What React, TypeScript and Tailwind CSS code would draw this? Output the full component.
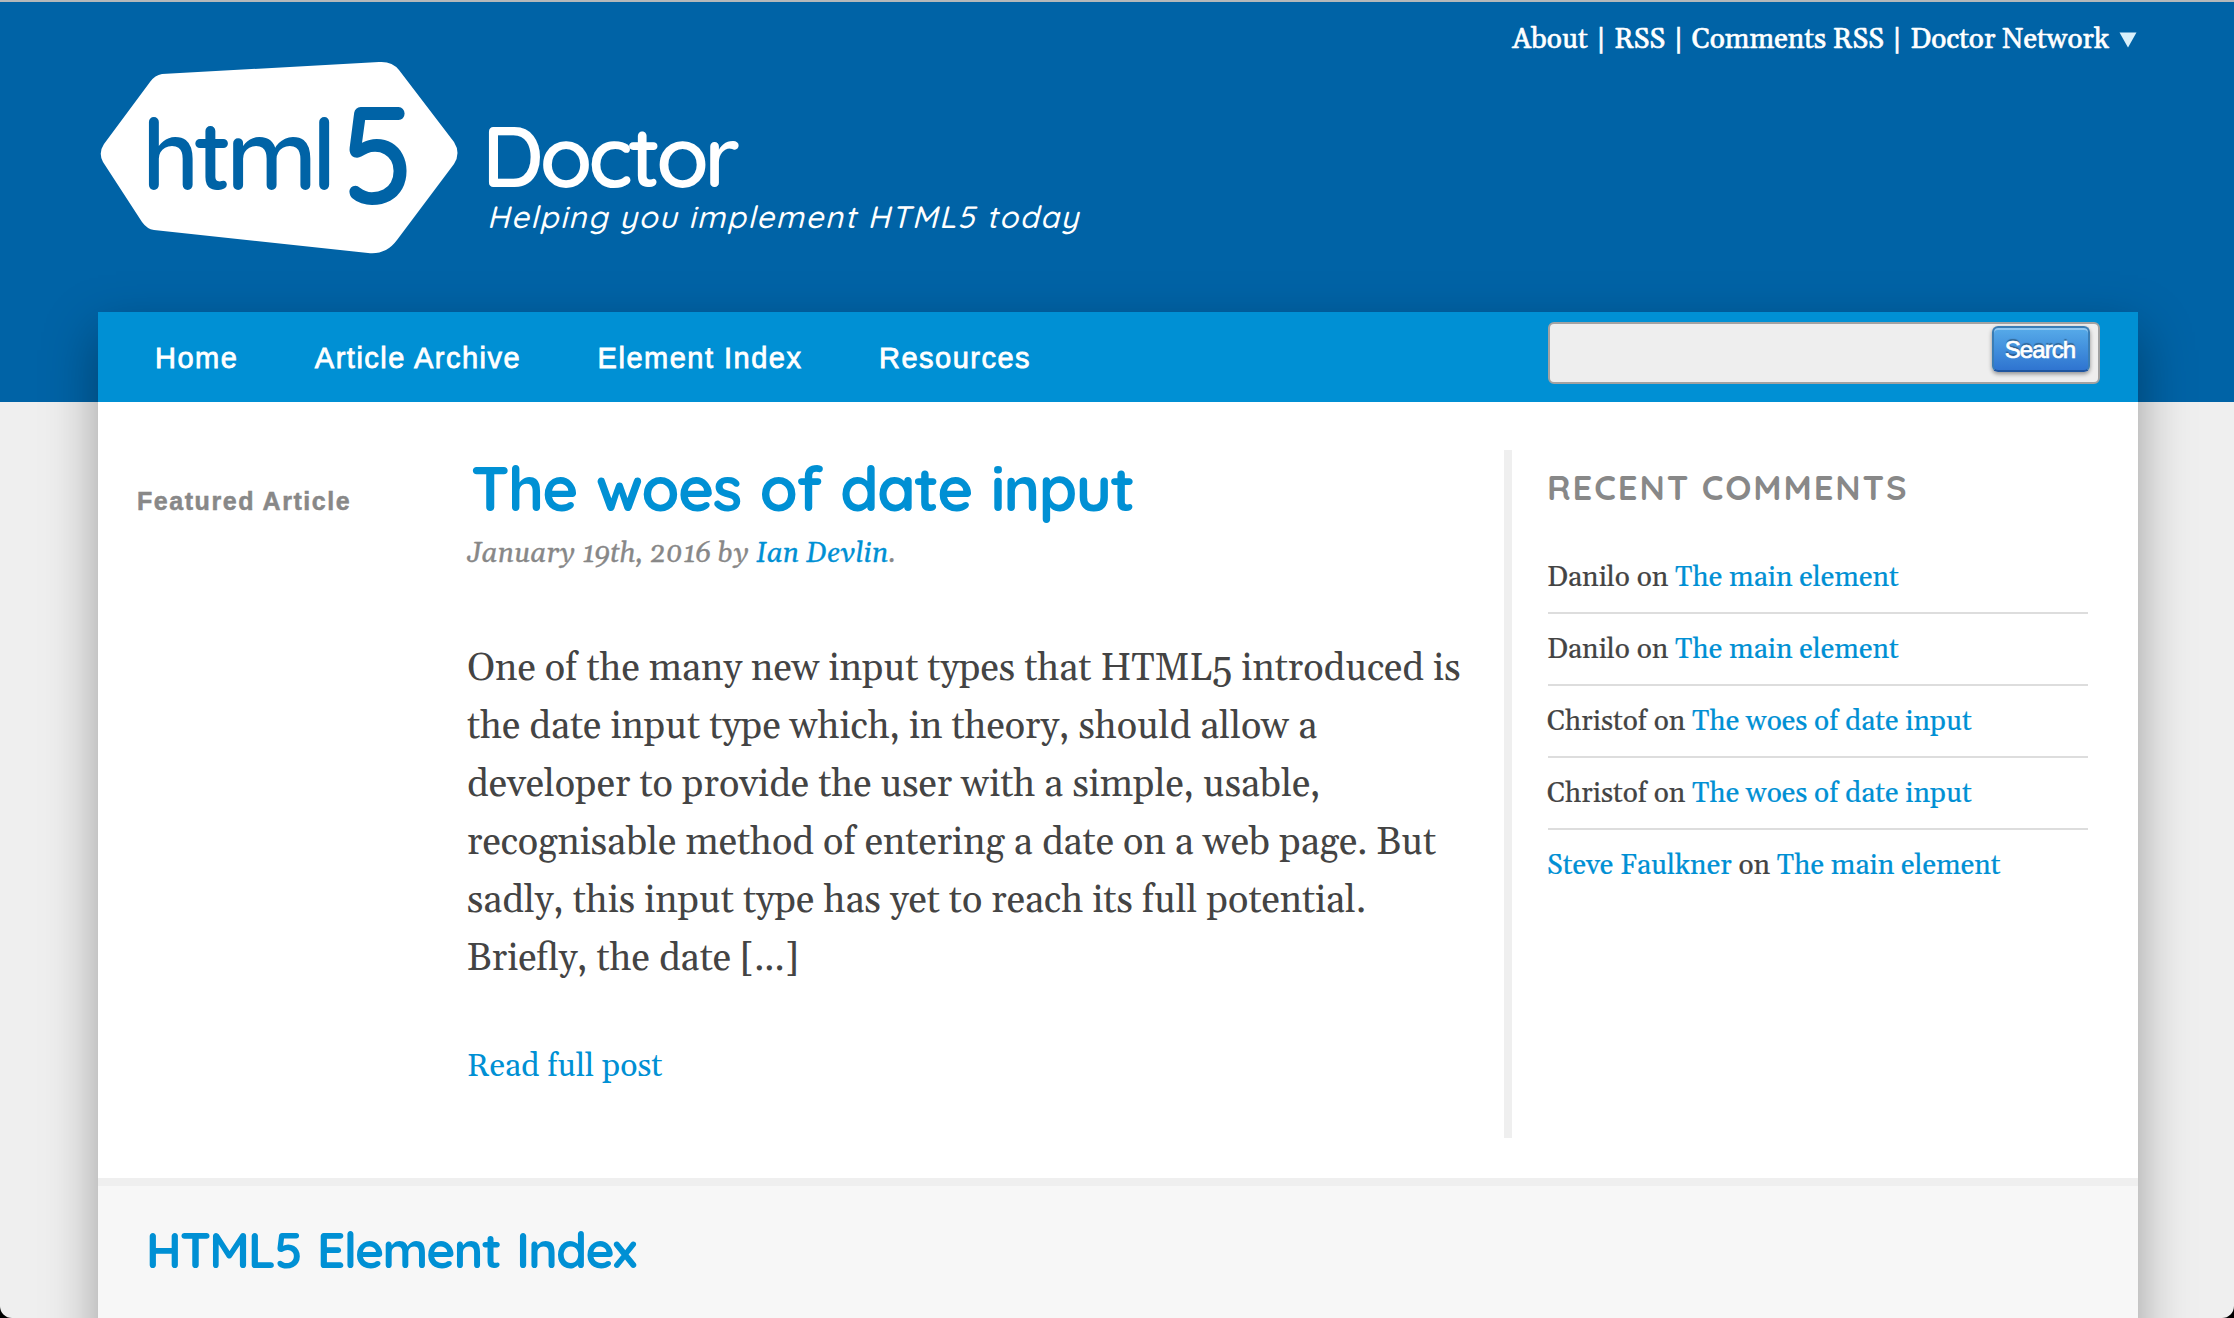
import React from "react";

const serif = "font-['Gelasio','Georgia','Liberation_Serif',serif]";
const sans = "font-['Liberation_Sans',Arial,sans-serif]";
const rounded = "font-['Quicksand','Lato',sans-serif]";

const navItems = ["Home", "Article Archive", "Element Index", "Resources"];

const comments = [
  { author: "Danilo", link: false, post: "The main element" },
  { author: "Danilo", link: false, post: "The main element" },
  { author: "Christof", link: false, post: "The woes of date input" },
  { author: "Christof", link: false, post: "The woes of date input" },
  { author: "Steve Faulkner", link: true, post: "The main element" },
];

const excerpt = [
  "One of the many new input types that HTML5 introduced is",
  "the date input type which, in theory, should allow a",
  "developer to provide the user with a simple, usable,",
  "recognisable method of entering a date on a web page. But",
  "sadly, this input type has yet to reach its full potential.",
  "Briefly, the date [...]",
];

function Logo() {
  return (
    <svg width="360" height="196" viewBox="0 0 360 196" className="block shrink-0" aria-label="html5">
      <path
        d="M62 14 L279 2 Q292 1 299 10 L354 82 Q361 93 354 104 L297 180 Q286 195 268 193 L54 170 Q47 169 42 162 L3 102 Q-2 93 4 84 L50 22 Q55 15 62 14 Z"
        fill="#fff"
      />
      <g fill="#0063a6" fontWeight="600" className={rounded}>
        <text x="42" y="130" fontSize="99" textLength="195">
          html
        </text>
        <text x="0" y="0" fontSize="139" transform="translate(241 143.5) scale(0.93 1)">
          5
        </text>
      </g>
    </svg>
  );
}

function Pipe() {
  return <span className="mx-[8px]">|</span>;
}

export default function App() {
  return (
    <div className="h-[1318px] w-[2234px] bg-black">
      <div className="h-full overflow-hidden rounded-b-[12px] bg-[#efefef]">
        <header className="h-[402px] border-t-2 border-[#b4b8ba] bg-[#0063a6] text-white">
          <div className={`mr-[97px] flex h-[58px] items-start justify-end pt-[18px] text-[28px] leading-[40px] [-webkit-text-stroke:0.6px_white] ${serif}`}>
            <a>About</a>
            <Pipe />
            <a>RSS</a>
            <Pipe />
            <a>Comments RSS</a>
            <Pipe />
            <a>Doctor Network</a>
            <svg width="18" height="16" viewBox="0 0 18 16" className="mt-[12px] ml-[10px]">
              <path d="M0.5 0.5 H17.5 L9 15.5 Z" fill="#d9f0fb" />
            </svg>
          </div>
          <div className="flex pl-[100px]">
            <Logo />
            <div className={`ml-[22px] pt-[53px] ${rounded}`}>
              <h1 className="text-[86px] leading-[84px] font-semibold tracking-[-4.7px]">Doctor</h1>
              <p className="ml-[5px] text-[31px] leading-[40px] font-medium whitespace-nowrap italic tracking-[1.57px]">
                Helping you implement HTML5 today
              </p>
            </div>
          </div>
        </header>

        <div className="relative mx-[98px] -mt-[90px] mr-[96px] h-[1060px] bg-white shadow-[0_20px_50px_rgba(0,0,0,0.35)]">
          <nav className={`flex h-[90px] bg-[#0090d4] pr-[38px] pl-[57px] text-white ${sans}`}>
            <ul className="flex gap-[76.5px] pt-[1px] text-[29px] leading-[90px] tracking-[1.5px] [-webkit-text-stroke:0.8px_white]">
              {navItems.map((item) => (
                <li key={item} className="whitespace-nowrap">{item}</li>
              ))}
            </ul>
            <form className="mt-[10px] ml-auto flex h-[62px] w-[552px] justify-end rounded-[6px] border-2 border-[#a2a2a2] bg-[#eee] pt-[2px] pr-[8px]">
              <button
                type="button"
                className="h-[46px] w-[98px] rounded-[6px] border-2 border-[#3a7db5] border-b-[#1f559f] bg-linear-to-b from-[#57abe9] to-[#2f74d0] pt-[1px] pr-[2px] text-[24px] leading-[41px] tracking-[-0.9px] text-white shadow-[0_2px_4px_rgba(0,0,0,0.4),inset_0_2px_0_rgba(255,255,255,0.35)] [-webkit-text-stroke:0.7px_white] [text-shadow:0_-2px_1px_rgba(0,0,0,0.35)]"
              >
                Search
              </button>
            </form>
          </nav>

          <section className="flex h-[776px] pt-[48px]">
            <aside className={`mt-[36px] ml-[39px] w-[330px] text-[25px] leading-[30px] font-bold tracking-[1.55px] text-[#888] [-webkit-text-stroke:0.5px_#888] ${sans}`}>
              Featured Article
            </aside>
            <article className={`w-[1037px] ${serif}`}>
              <h2 className={`mt-[7px] ml-[4px] text-[61.5px] leading-[62px] font-bold tracking-[-1.6px] [word-spacing:3px] whitespace-nowrap text-[#0090d4] ${rounded}`}>
                The woes of date input
              </h2>
              <p className="mt-[15px] text-[28px] leading-[40px] tracking-[0.05px] italic oldstyle-nums text-[#888] [-webkit-text-stroke:0.3px]">
                January 19th, 2016 by <a className="text-[#0090d4]">Ian Devlin</a>.
              </p>
              <p className="mt-[66px] text-[37.75px] leading-[58px] oldstyle-nums text-[#444]">
                {excerpt.map((line) => (
                  <span key={line} className="block whitespace-nowrap">{line}</span>
                ))}
              </p>
              <a className="mt-[59px] block text-[32px] leading-[40px] text-[#0090d4]">Read full post</a>
            </article>
            <div className={`h-[688px] w-[584px] border-l-8 border-[#efefef] pl-[35px] ${serif}`}>
              <h3 className={`mt-[17px] text-[34.5px] leading-[40px] font-bold tracking-[1.9px] text-[#888] ${rounded}`}>
                RECENT COMMENTS
              </h3>
              <ul className="mt-[35px] ml-px text-[28px] leading-[40px] text-[#444]">
                {comments.map((c, i) => (
                  <li key={i} className="border-b-2 border-[#ddd] pt-[16px] pb-[14px] whitespace-nowrap last:border-b-0 [-webkit-text-stroke:0.2px]">
                    <span className={c.link ? "-ml-px text-[#0090d4]" : "-ml-px"}>{c.author}</span> on{" "}
                    <a className="text-[#0090d4]">{c.post}</a>
                  </li>
                ))}
              </ul>
            </div>
          </section>

          <section className="h-[194px] border-t-8 border-[#efefef] bg-[#f7f7f7] pt-[33px] pl-[48px]">
            <h2 className={`text-[49.5px] leading-[60px] font-bold tracking-[-1.7px] [word-spacing:4px] text-[#0090d4] ${rounded}`}>
              HTML5 Element Index
            </h2>
          </section>
        </div>
      </div>
    </div>
  );
}
